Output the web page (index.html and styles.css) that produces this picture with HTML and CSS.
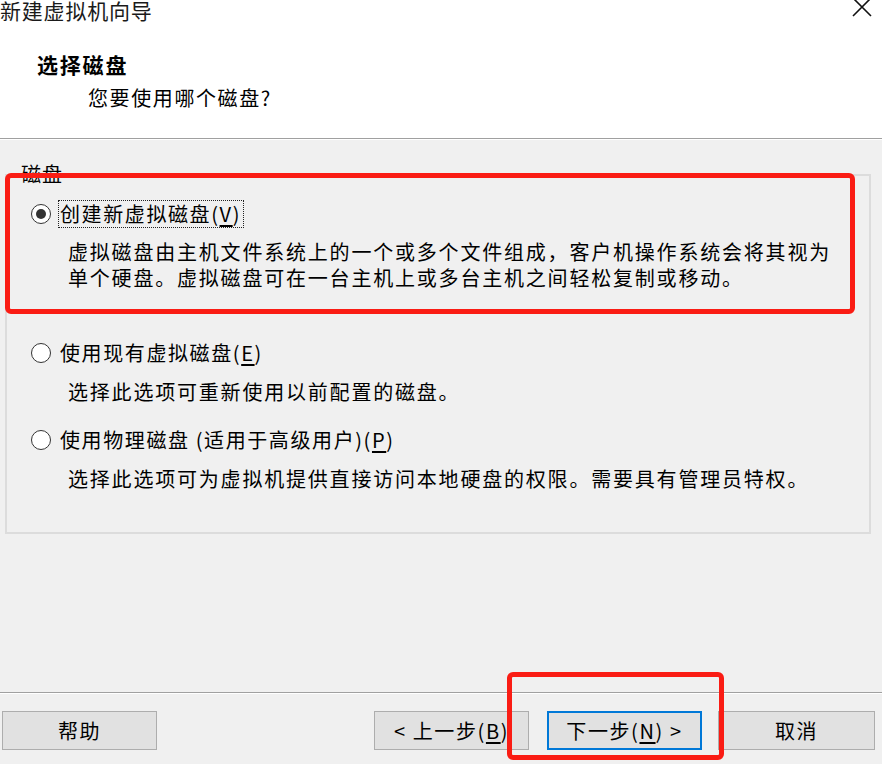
FILE: index.html
```html
<!DOCTYPE html>
<html lang="zh-CN">
<head>
<meta charset="utf-8">
<title>新建虚拟机向导</title>
<link rel="stylesheet" href="styles.css">
</head>
<body>
<div class="window">
  <div class="header">
    <div class="titlebar">
      <span class="title">新建虚拟机向导</span>
      <svg class="close" width="20" height="20" viewBox="0 0 20 20"><path d="M1 -1 L19 17 M19 -1 L1 17" stroke="#111" stroke-width="1.6" fill="none"/></svg>
    </div>
    <div class="heading">选择磁盘</div>
    <div class="subheading">您要使用哪个磁盘?</div>
  </div>
  <div class="content">
    <div class="group">
      <span class="group-title">磁盘</span>
      <div class="option first">
        <span class="radio checked"></span>
        <span class="label focus">创建新虚拟磁盘(<u>V</u>)</span>
      </div>
      <div class="desc d1">
        <div class="line">虚拟磁盘由主机文件系统上的一个或多个文件组成，客户机操作系统会将其视为</div>
        <div class="line">单个硬盘。虚拟磁盘可在一台主机上或多台主机之间轻松复制或移动。</div>
      </div>
      <div class="option o2">
        <span class="radio"></span>
        <span class="label">使用现有虚拟磁盘(<u>E</u>)</span>
      </div>
      <div class="desc"><div class="line">选择此选项可重新使用以前配置的磁盘。</div></div>
      <div class="option o3">
        <span class="radio"></span>
        <span class="label">使用物理磁盘 (适用于高级用户)(<u>P</u>)</span>
      </div>
      <div class="desc"><div class="line">选择此选项可为虚拟机提供直接访问本地硬盘的权限。需要具有管理员特权。</div></div>
    </div>
  </div>
  <div class="footer">
    <button class="btn help">帮助</button>
    <button class="btn back">&lt; 上一步(<u>B</u>)</button>
    <button class="btn next">下一步(<u>N</u>) &gt;</button>
    <button class="btn cancel">取消</button>
  </div>
  <div class="mark mark1"></div>
  <div class="mark mark2"></div>
</div>
</body>
</html>
```
FILE: styles.css
```css
* { box-sizing: border-box; }
html, body { margin: 0; padding: 0; }
body {
  width: 882px;
  height: 764px;
  overflow: hidden;
  background: #f0f0f0;
  font-family: "Noto Sans CJK SC", "Noto Sans", sans-serif;
  color: #000;
}
.window {
  position: relative;
  width: 882px;
  height: 764px;
}
.header {
  background: #fff;
  height: 139px;
  border-bottom: 1px solid #a0a0a0;
  box-shadow: 0 1px 0 #fff;
}
.titlebar {
  height: 40px;
  display: flex;
  justify-content: space-between;
  align-items: flex-start;
}
.title {
  font-size: 21px;
  line-height: 20px;
  letter-spacing: 0.8px;
  color: #1a1a1a;
}
.close {
  margin-right: 10px;
  margin-top: -1px;
}
.heading {
  font-weight: bold;
  font-size: 21px;
  line-height: 24px;
  letter-spacing: 1.8px;
  padding-left: 37px;
  margin-top: 12px;
}
.subheading {
  font-size: 20px;
  line-height: 24px;
  letter-spacing: 1.6px;
  padding-left: 88px;
  margin-top: 10px;
}
.content {
  height: 554px;
  padding-top: 35px;
  border-bottom: 1px solid #a0a0a0;
}
.group {
  position: relative;
  margin-left: 5px;
  width: 866px;
  height: 360px;
  border: 2px solid #dcdcdc;
  padding-top: 24px;
  padding-left: 24px;
}
.group-title {
  position: absolute;
  top: -13px;
  left: 13px;
  background: #f0f0f0;
  font-size: 20px;
  line-height: 22px;
  padding: 0 1px;
  letter-spacing: 1px;
}
.option {
  display: flex;
  align-items: center;
  height: 28px;
  font-size: 20px;
  letter-spacing: 1.6px;
}
.o2 { margin-top: 48px; }
.o3 { margin-top: 21px; }
.radio {
  width: 20px;
  height: 20px;
  border-radius: 50%;
  border: 1px solid #333;
  background: #fff;
  display: flex;
  align-items: center;
  justify-content: center;
  margin-right: 7px;
  flex: none;
}
.radio.checked::after {
  content: "";
  width: 10px;
  height: 10px;
  border-radius: 50%;
  background: #333;
}
.label {
  line-height: 26px;
  padding: 0 2px 0 1px;
  border: 1px solid transparent;
}
.label.focus { border: 1px dotted #222; }
.label u { text-underline-offset: 3px; }
.desc {
  font-size: 20px;
  letter-spacing: 1.8px;
  padding-left: 37px;
  margin-top: 12px;
  white-space: nowrap;
}
.line {
  height: 26px;
  line-height: 26px;
}
.desc.d1 { margin-top: 11px; }
.footer {
  height: 70px;
  border-top: 1px solid #fff;
  display: flex;
  align-items: flex-start;
  padding-top: 17px;
  padding-left: 2px;
}
.btn {
  font-family: "Noto Sans CJK SC", "Noto Sans", sans-serif;
  font-size: 20px;
  letter-spacing: 1.6px;
  height: 39px;
  width: 155px;
  background: #e1e1e1;
  border: 1px solid #adadad;
  color: #000;
  padding: 0;
  display: flex;
  align-items: center;
  justify-content: center;
  white-space: nowrap;
  overflow: hidden;
}
.btn u { text-underline-offset: 3px; }
.back { margin-left: 217px; }
.next { margin-left: 18px; border: 2px solid #0078d7; }
.cancel { margin-left: 16px; width: 157px; }
.mark {
  position: absolute;
  border: 5px solid #fa1c14;
  border-radius: 6px;
}
.mark1 { left: 5px; top: 173px; width: 850px; height: 141px; }
.mark2 { left: 507px; top: 672px; width: 217px; height: 88px; }
```
